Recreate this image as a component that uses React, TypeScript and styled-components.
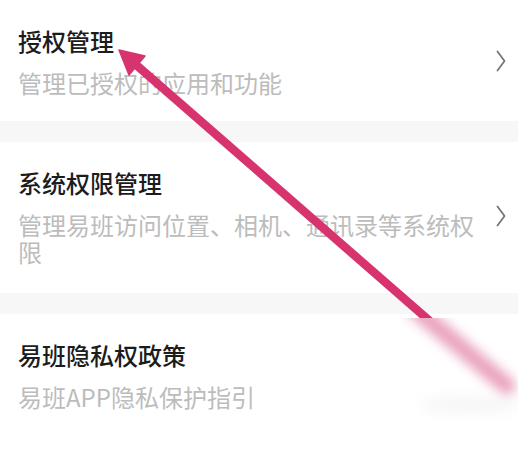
import React from "react";
import styled, { createGlobalStyle } from "styled-components";

const Global = createGlobalStyle`
  html, body { margin: 0; padding: 0; background: #ffffff; }
  body { font-family: "Noto Sans CJK SC", "Noto Sans", sans-serif; }
  * { box-sizing: border-box; }
`;

const Page = styled.div`
  position: relative;
  width: 518px;
  min-height: 455px;
  background: #ffffff;
  display: flex;
  flex-direction: column;
  overflow: hidden;
`;

const Row = styled.div<{ $bottom: number }>`
  display: flex;
  align-items: center;
  gap: 13px;
  padding: 25px 12px ${(p) => p.$bottom}px 18px;
  background: #ffffff;
`;

const TextBlock = styled.div`
  flex: 1;
  min-width: 0;
  display: flex;
  flex-direction: column;
  gap: 12px;
`;

const Title = styled.div`
  font-size: 24px;
  line-height: 32px;
  font-weight: 500;
  color: #1c1c1c;
`;

const Subtitle = styled.div`
  font-size: 24px;
  line-height: 27px;
  color: #bcbcbc;
`;

const ChevronBox = styled.div<{ $hidden?: boolean }>`
  width: 10px;
  height: 22px;
  flex: none;
  visibility: ${(p) => (p.$hidden ? "hidden" : "visible")};
  display: flex;
`;

const Separator = styled.div`
  height: 21px;
  background: #f7f7f8;
`;

const Overlay = styled.svg`
  position: absolute;
  left: 0;
  top: 0;
  pointer-events: none;
`;

const Chevron = () => (
  <svg width="10" height="22" viewBox="0 0 10 22">
    <path d="M1.5 1.5 L8.5 11 L1.5 20.5" fill="none" stroke="#777777" strokeWidth="1.8" strokeLinecap="round" strokeLinejoin="round" />
  </svg>
);

type Item = { title: string; subtitle: string; chevron: boolean; bottom: number };

const items: Item[] = [
  { title: "授权管理", subtitle: "管理已授权的应用和功能", chevron: true, bottom: 25 },
  { title: "系统权限管理", subtitle: "管理易班访问位置、相机、通讯录等系统权限", chevron: true, bottom: 28 },
  { title: "易班隐私权政策", subtitle: "易班APP隐私保护指引", chevron: false, bottom: 26 },
];

const Arrow = () => (
  <Overlay width="518" height="455" viewBox="0 0 518 455">
    <defs>
      <clipPath id="sharp">
        <rect x="0" y="0" width="518" height="318" />
      </clipPath>
      <clipPath id="soft">
        <rect x="0" y="318" width="518" height="137" />
      </clipPath>
      <filter id="blur" x="-50%" y="-50%" width="200%" height="200%">
        <feGaussianBlur stdDeviation="6" />
      </filter>
    </defs>
    <g clipPath="url(#sharp)">
      <line x1="134" y1="63" x2="440" y2="330" stroke="#d7346f" strokeWidth="8.5" />
    </g>
    <polygon points="119,50 129,75 145,56" fill="#d7346f" stroke="#d7346f" strokeWidth="1.5" strokeLinejoin="round" />
    <g clipPath="url(#soft)">
      <line x1="412" y1="306" x2="507" y2="386" stroke="#e58fb1" strokeWidth="17" strokeLinecap="round" filter="url(#blur)" opacity="0.85" />
      <ellipse cx="470" cy="405" rx="50" ry="10" fill="#e6e6e6" opacity="0.3" filter="url(#blur)" />
    </g>
  </Overlay>
);

export default function App() {
  return (
    <>
      <Global />
      <Page>
        {items.map((it, i) => (
          <React.Fragment key={it.title}>
            {i > 0 && <Separator />}
            <Row $bottom={it.bottom}>
              <TextBlock>
                <Title>{it.title}</Title>
                <Subtitle>{it.subtitle}</Subtitle>
              </TextBlock>
              <ChevronBox $hidden={!it.chevron}>
                <Chevron />
              </ChevronBox>
            </Row>
          </React.Fragment>
        ))}
        <Arrow />
      </Page>
    </>
  );
}
